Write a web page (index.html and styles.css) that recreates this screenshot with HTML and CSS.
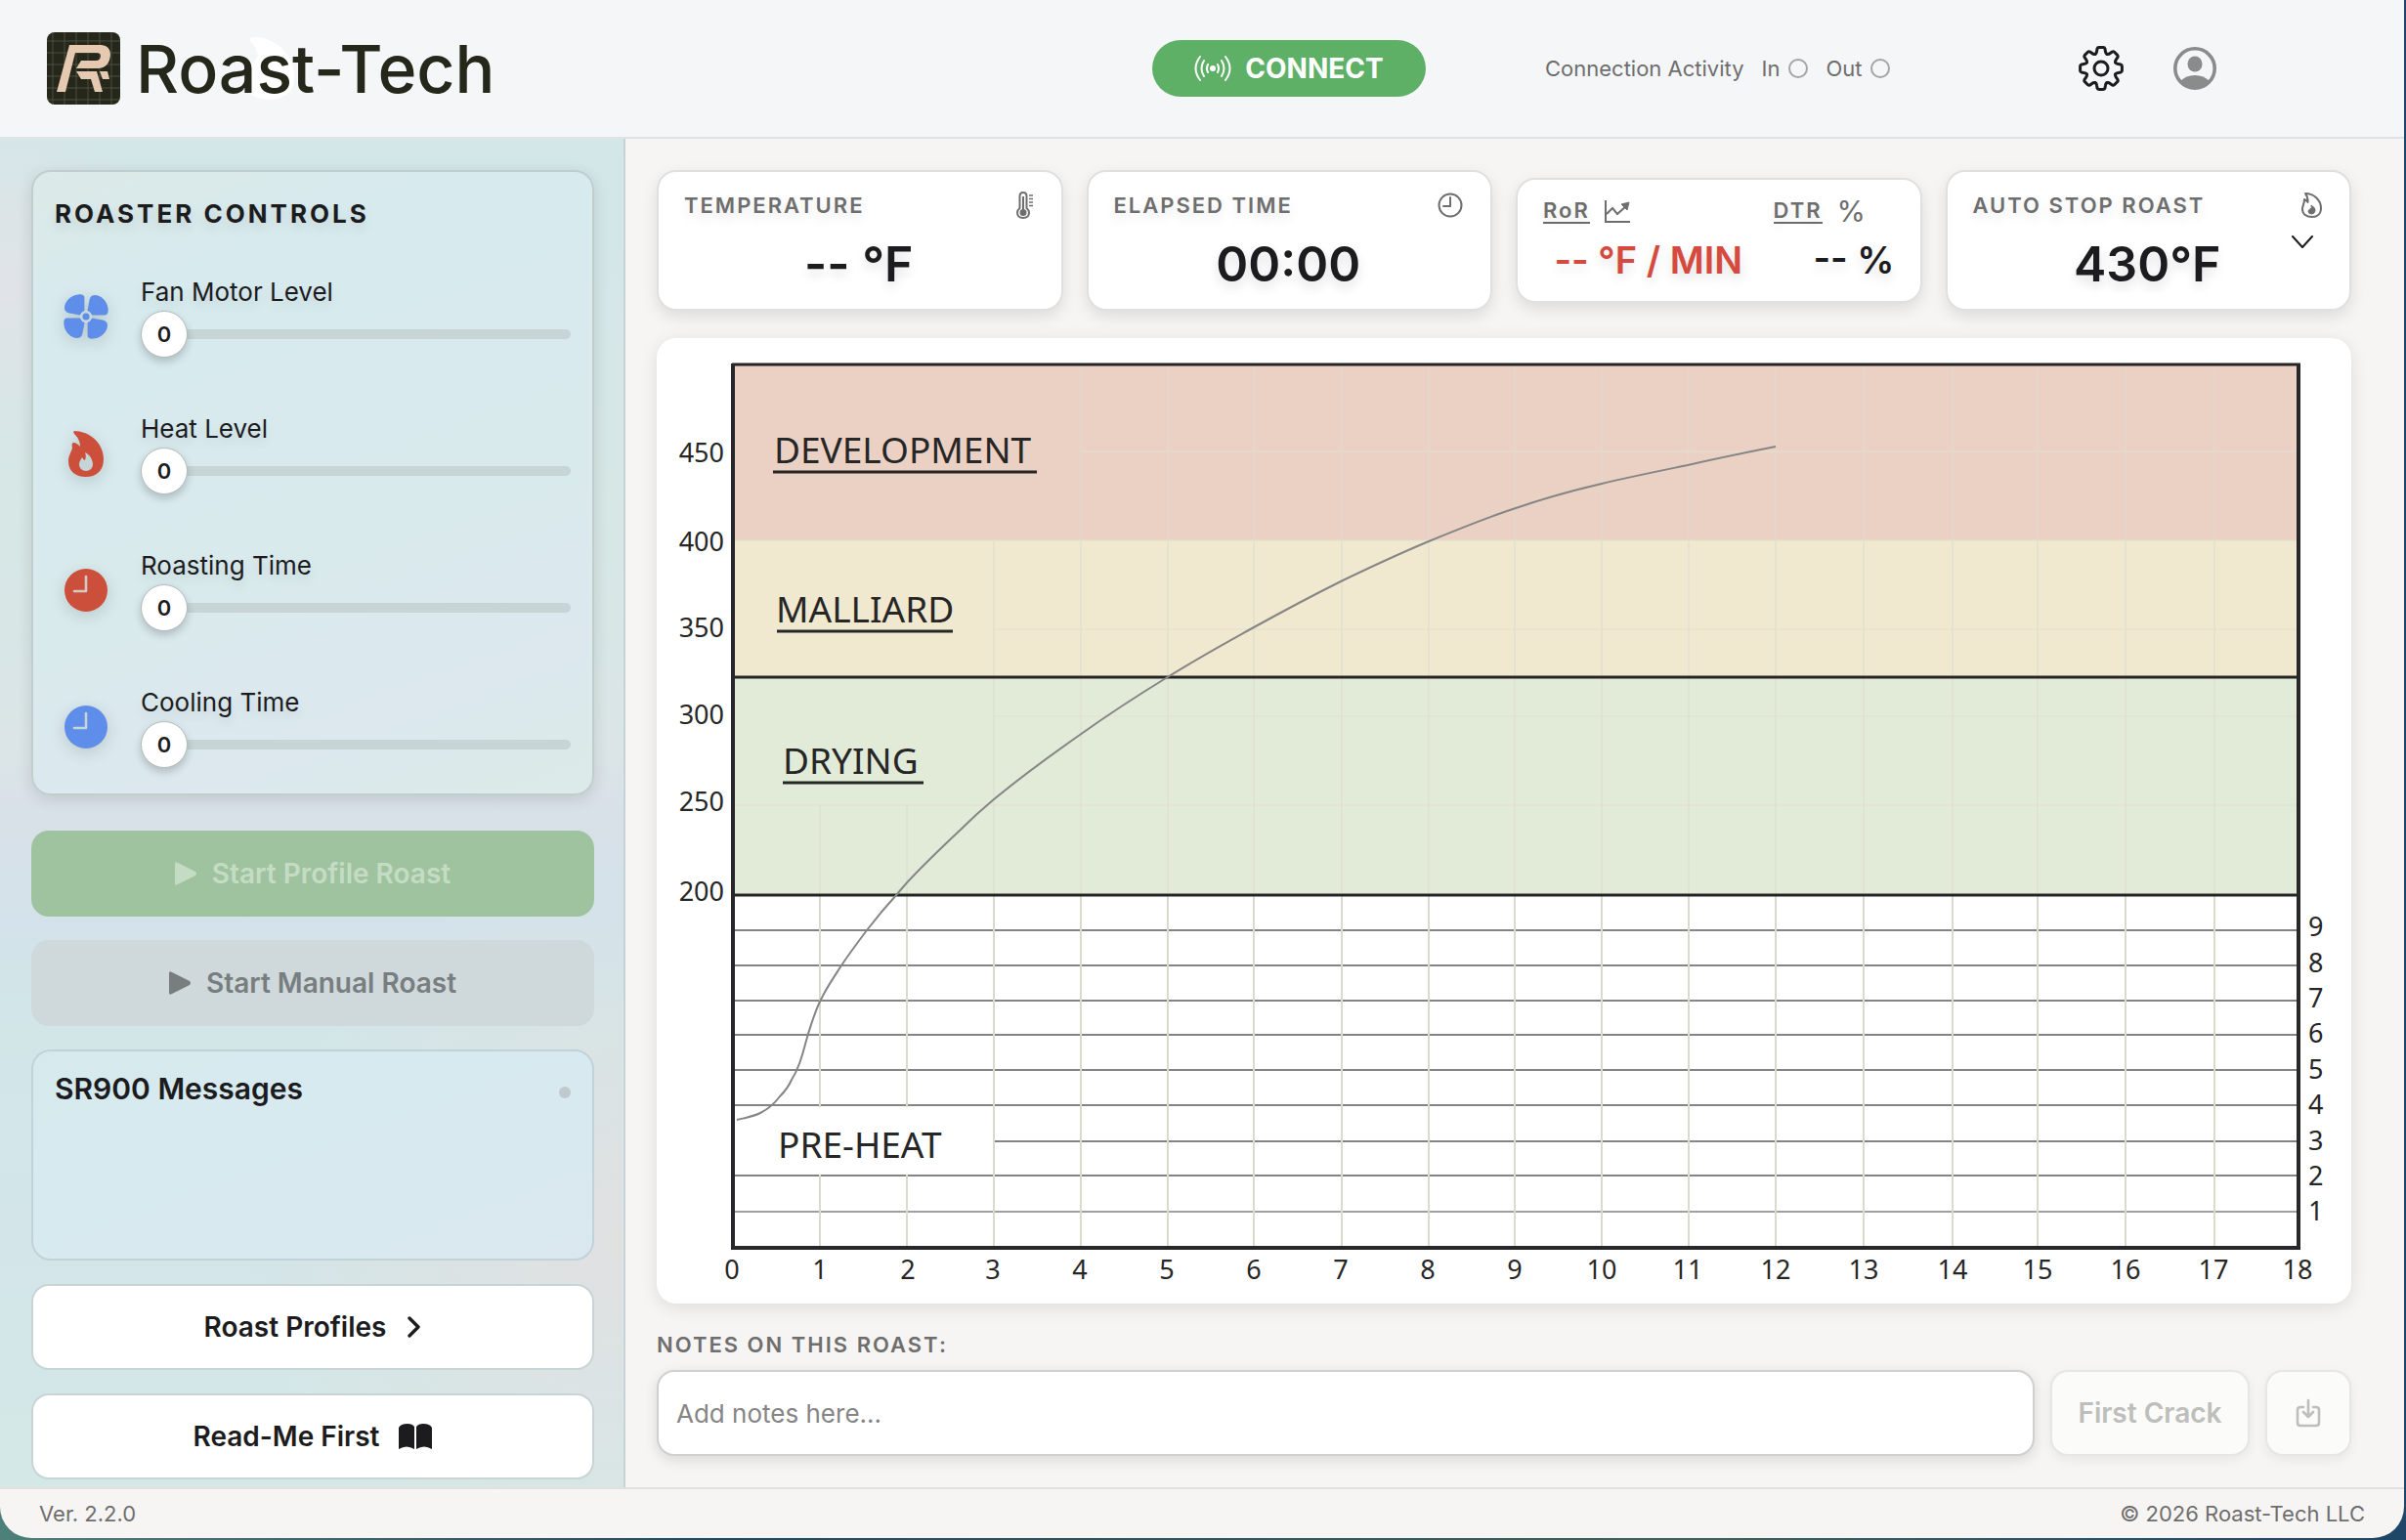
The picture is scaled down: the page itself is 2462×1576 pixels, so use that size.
FILE: index.html
```html
<!DOCTYPE html>
<html lang="en">
<head>
    <meta charset="UTF-8">
    <meta name="viewport" content="width=device-width, initial-scale=1.0">
    <title>Roast-Tech</title>
    <link rel="stylesheet" href="styles.css">
</head>
<body>
<div class="window">
    <header class="topbar">
        <div class="brand">
            <svg class="brand-badge" viewBox="0 0 75 74" aria-hidden="true">
                <defs>
                    <pattern id="mesh" width="12" height="12" patternUnits="userSpaceOnUse">
                        <path d="M6 0V12M0 9H12" stroke="#4b4c40" stroke-width="1" fill="none"/>
                    </pattern>
                </defs>
                <rect width="75" height="74" rx="8" fill="#26271b"/>
                <rect width="75" height="74" rx="8" fill="url(#mesh)"/>
                <path d="M23 13H56Q65 14 65 23Q64 36 53 37H30L35 29H50Q55 29 55 24Q55 21 51 21H29L19 61H10Z" fill="#e5c9b1"/>
                <path d="M30 40H51L57 61H49L45 48H35ZM54 40H62L64 48H57Z" fill="#e5c9b1"/>
            </svg>
            <span class="brand-name">
                <svg class="brand-drop" viewBox="0 0 53 64" aria-hidden="true">
                    <path d="M5 1Q10-1 18 1Q44 8 50 36Q53 62 25 64Q0 64 0 42Q8 25 13 20Q12 10 5 4Z" fill="#fff"/>
                </svg>
                <span>Roast-Tech</span>
            </span>
        </div>
        <button class="connect" type="button">
            <svg width="38" height="26" viewBox="0 0 38 26" fill="none" stroke="#fff" stroke-width="2" stroke-linecap="round" aria-hidden="true">
                <circle cx="19" cy="13" r="3" fill="#fff" stroke="none"/>
                <path d="M14 9Q12 13 14 17M24 9Q26 13 24 17M10 5Q5 13 10 21M28 5Q33 13 28 21M6 1Q-3 13 6 25M32 1Q41 13 32 25"/>
            </svg>
            CONNECT
        </button>
        <div class="activity">
            <span>Connection Activity</span>
            <span class="signal">In <i class="lamp"></i></span>
            <span class="signal">Out <i class="lamp"></i></span>
        </div>
        <div class="tools">
            <button class="tool" type="button" aria-label="Settings">
                <svg width="46" height="46" viewBox="-23 -23 46 46" fill="none" stroke="#1c1c1e" stroke-width="3" stroke-linecap="round" stroke-linejoin="round">
                    <defs>
                        <path id="tooth" d="M-6-14.6Q-4.6-15.4-4.4-17.5L-4-20Q-3.6-21.4-2.2-21.4H2.2Q3.6-21.4 4-20L4.4-17.5Q4.6-15.4 6-14.6"/>
                    </defs>
                    <use href="#tooth"/>
                    <use href="#tooth" transform="rotate(45)"/>
                    <use href="#tooth" transform="rotate(90)"/>
                    <use href="#tooth" transform="rotate(135)"/>
                    <use href="#tooth" transform="rotate(180)"/>
                    <use href="#tooth" transform="rotate(225)"/>
                    <use href="#tooth" transform="rotate(270)"/>
                    <use href="#tooth" transform="rotate(315)"/>
                    <circle r="7"/>
                </svg>
            </button>
            <button class="tool" type="button" aria-label="Account">
                <svg width="44" height="44" viewBox="0 0 44 44">
                    <circle cx="22" cy="22" r="20.2" fill="none" stroke="#8a8c8c" stroke-width="3.6"/>
                    <ellipse cx="22" cy="17.5" rx="7.5" ry="8" fill="#8a8c8c"/>
                    <path d="M7 35Q13 29 22 29Q31 29 37 35Q31 43 22 43Q13 43 7 35Z" fill="#8a8c8c"/>
                </svg>
            </button>
        </div>
    </header>

    <div class="content">
        <aside class="sidebar">
            <section class="controls">
                <h2>ROASTER CONTROLS</h2>

                <div class="control">
                    <svg class="control-icon" width="48" height="48" viewBox="-24 -24 48 48" fill="#5f8dea" aria-hidden="true">
                        <defs>
                            <path id="blade" d="M-1.6-6V-20C-2-22-4-23-8-22.6C-16-22-22-15-22-9C-22-5-19-4-17-3.500L-6-1.500Z"/>
                        </defs>
                        <use href="#blade"/>
                        <use href="#blade" transform="rotate(90)"/>
                        <use href="#blade" transform="rotate(180)"/>
                        <use href="#blade" transform="rotate(270)"/>
                        <circle r="6" fill="#d8e9ed"/>
                        <circle r="4.500" stroke="#c5d5d6" stroke-width="2"/>
                    </svg>
                    <div class="control-body">
                        <label for="fan">Fan Motor Level</label>
                        <div class="slider">
                            <input type="range" id="fan" min="0" max="9" value="0">
                            <output for="fan">0</output>
                        </div>
                    </div>
                </div>

                <div class="control">
                    <svg class="control-icon" width="36" height="47" viewBox="0 0 36 47" aria-hidden="true">
                        <path d="M6 0C20 0 36 11 36 29C36 41 28 47 18 47C7 47 0 41 0 31C0 25 3 22 4 17C3 14 4 12 5 12C8 12 10 14 12 16C12 10 9 6 6 3C5 2 5 0 6 0Z" fill="#cc4f3c"/>
                        <path d="M17 22C22 24 25 30 25 34C25 38 22 41 18 41C14 41 11 38 11 34C11 31 13 29 14 27C15 29 16 30 17 30C18 27 18 25 17 22Z" fill="#c5d5d6"/>
                    </svg>
                    <div class="control-body">
                        <label for="heat">Heat Level</label>
                        <div class="slider">
                            <input type="range" id="heat" min="0" max="9" value="0">
                            <output for="heat">0</output>
                        </div>
                    </div>
                </div>

                <div class="control">
                    <svg class="control-icon" width="44" height="44" viewBox="0 0 44 44" aria-hidden="true">
                        <circle cx="22" cy="22" r="22" fill="#cc4f3c"/>
                        <path d="M22 8V23H10" fill="none" stroke="#d3c9c5" stroke-width="2.6" stroke-linecap="round" stroke-linejoin="round"/>
                    </svg>
                    <div class="control-body">
                        <label for="roastTime">Roasting Time</label>
                        <div class="slider">
                            <input type="range" id="roastTime" min="0" max="15" value="0">
                            <output for="roastTime">0</output>
                        </div>
                    </div>
                </div>

                <div class="control">
                    <svg class="control-icon" width="44" height="44" viewBox="0 0 44 44" aria-hidden="true">
                        <circle cx="22" cy="22" r="22" fill="#5f8dea"/>
                        <path d="M22 8V23H10" fill="none" stroke="#c5d5d6" stroke-width="2.6" stroke-linecap="round" stroke-linejoin="round"/>
                    </svg>
                    <div class="control-body">
                        <label for="coolTime">Cooling Time</label>
                        <div class="slider">
                            <input type="range" id="coolTime" min="0" max="15" value="0">
                            <output for="coolTime">0</output>
                        </div>
                    </div>
                </div>
            </section>

            <button class="side-btn start-profile" type="button" disabled>
                <svg width="22" height="24" viewBox="0 0 22 24" fill="currentColor" aria-hidden="true"><path d="M0 2Q0-1 3 1L21 10Q23 12 21 14L3 23Q0 25 0 22Z"/></svg>
                Start Profile Roast
            </button>
            <button class="side-btn start-manual" type="button" disabled>
                <svg width="22" height="24" viewBox="0 0 22 24" fill="currentColor" aria-hidden="true"><path d="M0 2Q0-1 3 1L21 10Q23 12 21 14L3 23Q0 25 0 22Z"/></svg>
                Start Manual Roast
            </button>

            <section class="messages">
                <h2>SR900 Messages</h2>
                <span class="status-dot"></span>
            </section>

            <button class="side-btn plain" type="button">
                Roast Profiles
                <svg class="btn-chevron" width="14" height="22" viewBox="0 0 14 22" fill="none" stroke="currentColor" stroke-width="3.4" stroke-linecap="round" stroke-linejoin="round" aria-hidden="true"><path d="M2 2L11 11L2 20"/></svg>
            </button>
            <button class="side-btn plain" type="button">
                Read-Me First
                <svg class="btn-book" width="34" height="26" viewBox="0 0 34 26" fill="currentColor" aria-hidden="true"><path d="M0 4Q2 0 9 0Q14 0 16 3V26Q8 21 0 26ZM18 3Q20 0 25 0Q32 0 34 4V26Q26 21 18 26Z"/></svg>
            </button>
        </aside>

        <main class="main">
            <div class="stats">
                <section class="stat">
                    <div class="stat-head">
                        <h3>TEMPERATURE</h3>
                        <svg width="18" height="28" viewBox="0 0 18 28" fill="none" stroke="#6e6e6e" stroke-width="2" aria-hidden="true">
                            <path d="M3.5 5Q3.5 1 7 1Q10.500 1 10.500 5V17Q13 19 13 21.500Q13 27 7 27Q1 27 1 21.500Q1 19 3.500 17Z"/>
                            <path d="M7 5V19" stroke-width="2"/>
                            <circle cx="7" cy="21.500" r="2.500" fill="#6e6e6e"/>
                            <path d="M13 4H17M13 7.500H17M13 11H17M13 14.500H17" stroke-width="1.500"/>
                        </svg>
                    </div>
                    <p class="stat-value">-- °F</p>
                </section>

                <section class="stat">
                    <div class="stat-head">
                        <h3>ELAPSED TIME</h3>
                        <svg width="26" height="26" viewBox="0 0 26 26" fill="none" stroke="#6e6e6e" stroke-width="2" stroke-linecap="round" aria-hidden="true">
                            <circle cx="13" cy="13" r="11.500"/>
                            <path d="M13 5V14H6"/>
                        </svg>
                    </div>
                    <p class="stat-value">00:00</p>
                </section>

                <section class="stat split">
                    <div class="half rate">
                        <div class="half-head">
                            <h3 class="underlined">RoR</h3>
                            <svg width="26" height="23" viewBox="0 0 26 23" fill="none" stroke="#6e6e6e" stroke-width="2" aria-hidden="true">
                                <path d="M1 0V22H26"/>
                                <path d="M2 14L8 8L13 14L22 6"/>
                                <path d="M17 4L25 2L23 10Z" fill="#6e6e6e" stroke-width="1"/>
                            </svg>
                        </div>
                        <p class="half-value">-- °F / MIN</p>
                    </div>
                    <div class="half dtr">
                        <div class="half-head">
                            <h3 class="underlined">DTR</h3>
                            <span class="percent">%</span>
                        </div>
                        <p class="half-value">-- %</p>
                    </div>
                </section>

                <section class="stat">
                    <div class="stat-head">
                        <h3><label for="autoStop">AUTO STOP ROAST</label></h3>
                        <svg width="21" height="26" viewBox="0 0 21 26" fill="none" stroke="#6e6e6e" stroke-width="2" stroke-linejoin="round" aria-hidden="true">
                            <path d="M4 1C13 1 20 8 20 16C20 22 16 25 11 25C5 25 1 22 1 17C1 13 3 12 3 7Q5 8 6.500 10Q7 5 4 1Z"/>
                            <path d="M10 13Q15 16 14 19Q13 22 10.500 22Q7 22 7 19Q8 17 9 17Q11 16 10 13Z" fill="#6e6e6e" stroke-width="1"/>
                        </svg>
                    </div>
                    <select id="autoStop" class="stat-value">
                        <option>430°F</option>
                        <option>440°F</option>
                        <option>450°F</option>
                    </select>
                    <svg class="select-arrow" width="22" height="13" viewBox="0 0 22 13" fill="none" stroke="#1c1c1e" stroke-width="2" stroke-linecap="round" stroke-linejoin="round" aria-hidden="true"><path d="M1 1L11 12L21 1"/></svg>
                </section>
            </div>

            <section class="chart">
                <svg viewBox="0 0 1734 988" role="img" aria-label="Roast curve">
                    <!-- phases -->
                    <rect class="development" x="78" y="27" width="1602" height="180"/>
                    <rect class="malliard" x="78" y="207" width="1602" height="140"/>
                    <rect class="drying" x="78" y="347" width="1602" height="223"/>

                    <!-- power steps -->
                    <path class="steps" d="M80 606H1678M80 642H1678M80 678H1678M80 713H1678M80 749H1678M80 785H1678M346 822H1678M80 857H1678"/>
                    <path class="steps faint" d="M80 894H1678"/>

                    <!-- minutes -->
                    <path class="minutes soft" d="M434 28V570M523 28V570M611 28V570M701 28V570M790 28V570M878 28V570M967 28V570M1056 28V570M1145 28V570M1235 28V570M1326 28V570M1413 28V570M1503 28V570M1594 28V570M345 208V570M167 478V570M256 478V570"/>
                    <path class="minutes" d="M167 570V787M167 856V929M256 570V787M256 856V929M345 570V929M434 570V929M523 570V929M611 570V929M701 570V929M790 570V929M878 570V929M967 570V929M1056 570V929M1145 570V929M1235 570V929M1326 570V929M1413 570V929M1503 570V929M1594 570V929"/>
                    <path class="degrees" d="M434 116H1678M80 207H1678M345 298H1678M345 387H1678M80 478H1678"/>

                    <!-- frame -->
                    <path class="divider" d="M78 347H1680M78 570H1680"/>
                    <path class="divider" d="M77 27H1682"/>
                    <path class="axis" d="M78 26V931H1680V26"/>

                    <path class="curve" d="M82 800C90 798 98 797 106 793C114 789 120 784 126 776C131 771 135 766 138 759C147 745 150 729 155 712C159 699 163 686 169 675C175 663 182 653 189 642C197 630 206 618 215 606C225 593 235 581 246 569C251 563 256 557 261 552C277 535 294 519 311 503C322 492 333 482 345 472C373 449 403 427 433 406C461 386 490 367 521 348C550 330 580 313 611 296C640 280 670 264 700 249C729 235 759 221 790 208C819 196 848 184 879 174C908 164 937 156 967 149C996 142 1026 136 1055 130C1085 123 1115 117 1145 111"/>

                    <g class="phase">
                        <text x="120" y="128">DEVELOPMENT</text>
                        <text x="122" y="291">MALLIARD</text>
                        <text x="129" y="446">DRYING</text>
                        <text x="124" y="839">PRE-HEAT</text>
                    </g>
                    <path class="phase-line" d="M119 137H389M123 300H303M129 455H273"/>

                    <g class="scale left">
                        <text x="69" y="127">450</text>
                        <text x="69" y="218">400</text>
                        <text x="69" y="306">350</text>
                        <text x="69" y="395">300</text>
                        <text x="69" y="484">250</text>
                        <text x="69" y="576">200</text>
                    </g>
                    <g class="scale bottom">
                        <text x="77" y="963">0</text>
                        <text x="167" y="963">1</text>
                        <text x="257" y="963">2</text>
                        <text x="344" y="963">3</text>
                        <text x="433" y="963">4</text>
                        <text x="522" y="963">5</text>
                        <text x="611" y="963">6</text>
                        <text x="700" y="963">7</text>
                        <text x="789" y="963">8</text>
                        <text x="878" y="963">9</text>
                        <text x="967" y="963">10</text>
                        <text x="1055" y="963">11</text>
                        <text x="1145" y="963">12</text>
                        <text x="1235" y="963">13</text>
                        <text x="1326" y="963">14</text>
                        <text x="1413" y="963">15</text>
                        <text x="1503" y="963">16</text>
                        <text x="1593" y="963">17</text>
                        <text x="1679" y="963">18</text>
                    </g>
                    <g class="scale right">
                        <text x="1690" y="612">9</text>
                        <text x="1690" y="649">8</text>
                        <text x="1690" y="685">7</text>
                        <text x="1690" y="721">6</text>
                        <text x="1690" y="758">5</text>
                        <text x="1690" y="794">4</text>
                        <text x="1690" y="831">3</text>
                        <text x="1690" y="867">2</text>
                        <text x="1690" y="903">1</text>
                    </g>
                </svg>
            </section>

            <div class="notes">
                <label for="notes">NOTES ON THIS ROAST:</label>
                <div class="notes-row">
                    <input type="text" id="notes" placeholder="Add notes here...">
                    <button class="ghost first-crack" type="button" disabled>First Crack</button>
                    <button class="ghost save" type="button" aria-label="Save roast" disabled>
                        <svg width="26" height="30" viewBox="0 0 26 30" fill="none" stroke="currentColor" stroke-width="2.600" stroke-linecap="round" stroke-linejoin="round" aria-hidden="true">
                            <path d="M8 9H5Q2 9 2 12V25Q2 28 5 28H21Q24 28 24 25V12Q24 9 21 9H18"/>
                            <path d="M13 2V19M8 14L13 19L18 14"/>
                        </svg>
                    </button>
                </div>
            </div>
        </main>
    </div>

    <footer class="footer">
        <span>Ver. 2.2.0</span>
        <span>© 2026 Roast-Tech LLC</span>
    </footer>
</div>
</body>
</html>
```

FILE: styles.css
```css
* {
    box-sizing: border-box;
}

body {
    margin: 0;
    background: linear-gradient(90deg, #4c8078, #24495a 30%, #41605a 70%, #1d4668);
    color: #1c1c1e;
    font-family: Inter, "Liberation Sans", sans-serif;
    font-size: 26px;
}

h2, h3, p {
    margin: 0;
}

button, input, select {
    font-family: inherit;
    color: inherit;
}

.window {
    display: flex;
    flex-direction: column;
    min-height: calc(100vh - 2px);
    margin-right: 2px;
    overflow: hidden;
    background: #f7f5f3;
    border-radius: 0 0 32px 32px;
}

/* top bar */
.topbar {
    display: flex;
    align-items: center;
    height: 142px;
    padding: 0 192px 0 48px;
    background: #f5f6f8;
    border-bottom: 2px solid #e1e2e4;
}

.brand {
    display: flex;
    align-items: center;
    gap: 16px;
    margin-right: auto;
}

.brand-badge {
    width: 75px;
    height: 74px;
}

.brand-name {
    position: relative;
    font-size: 68px;
    font-weight: 500;
    line-height: 72px;
    color: #26271b;
}

.brand-name span {
    position: relative;
}

.brand-drop {
    position: absolute;
    left: 112px;
    top: 4px;
    width: 53px;
    height: 64px;
}

.connect {
    display: flex;
    align-items: center;
    justify-content: center;
    gap: 14px;
    width: 280px;
    height: 58px;
    margin-right: 122px;
    border: 0;
    border-radius: 29px;
    background: #5eb067;
    color: #fff;
    font-size: 28px;
    font-weight: 700;
}

.activity {
    display: flex;
    align-items: center;
    gap: 18px;
    width: 358px;
    margin-right: 188px;
    font-size: 22px;
    color: #6e6e6e;
    white-space: nowrap;
}

.signal {
    display: flex;
    align-items: center;
    gap: 9px;
}

.lamp {
    width: 20px;
    height: 20px;
    border: 2px solid #a3a4a6;
    border-radius: 50%;
}

.tools {
    display: flex;
    align-items: center;
    gap: 51px;
}

.tool {
    display: flex;
    padding: 0;
    border: 0;
    background: none;
}

/* layout */
.content {
    display: flex;
    flex: 1;
}

.sidebar {
    display: flex;
    flex-direction: column;
    gap: 24px;
    flex: 0 0 640px;
    padding: 32px 30px 8px 32px;
    border-right: 2px solid #c5d2d6;
    background:
        radial-gradient(circle at 0 150px, rgba(226, 227, 232, 0.9), rgba(226, 227, 232, 0) 180px),
        radial-gradient(circle at 100% 1130px, rgba(226, 224, 224, 0.9), rgba(226, 224, 224, 0) 380px),
        linear-gradient(#d3e6e8, #d6e7e6 28%, #dbe5e7 45%, #d8e0e8 51%, #d3e2ea 58%, #d2e6e8 66%, #d3e5e8 82%, #d4e8e7);
}

.controls {
    margin-bottom: 12px;
    padding: 24px 22px 26px;
    border: 2px solid #c1ced0;
    border-radius: 20px;
    background: linear-gradient(160deg, #dceae8, #d7eaee 20%, #d9eaec 60%, #dce8ee 80%, #dceae8);
    box-shadow: 0 4px 16px rgba(0, 0, 0, 0.12);
}

.controls h2 {
    margin-bottom: 44px;
    font-size: 26px;
    line-height: 38px;
    font-weight: 700;
    letter-spacing: 3px;
    text-shadow: 0 6px 12px rgba(0, 0, 0, 0.1);
}

.control {
    display: grid;
    grid-template-columns: 64px 1fr;
    gap: 24px;
    align-items: center;
}

.control + .control {
    margin-top: 56px;
}

.control-icon {
    justify-self: center;
    filter: drop-shadow(0 4px 8px rgba(0, 0, 0, 0.14));
}

.control-body {
    display: flex;
    flex-direction: column;
    gap: 2px;
}

.control-body label {
    line-height: 34px;
    text-shadow: 0 6px 12px rgba(0, 0, 0, 0.1);
}

.slider {
    position: relative;
    height: 48px;
}

.slider input {
    -webkit-appearance: none;
    appearance: none;
    display: block;
    width: 100%;
    height: 48px;
    margin: 0;
    background: none;
}

.slider input::-webkit-slider-runnable-track {
    height: 10px;
    border-radius: 5px;
    background: #c7d5d7;
}

.slider input::-webkit-slider-thumb {
    -webkit-appearance: none;
    width: 48px;
    height: 48px;
    margin-top: -19px;
    border: 1px solid #b4bcbd;
    border-radius: 50%;
    background: #fff;
    box-shadow: 0 4px 8px rgba(0, 0, 0, 0.2);
}

.slider output {
    position: absolute;
    left: 0;
    top: 0;
    width: 48px;
    font-size: 22px;
    line-height: 48px;
    font-weight: 600;
    text-align: center;
    pointer-events: none;
}

.side-btn {
    display: flex;
    align-items: center;
    justify-content: center;
    gap: 16px;
    height: 88px;
    border: 0;
    border-radius: 18px;
    font-size: 28px;
    font-weight: 600;
}

.start-profile {
    background: #9fc39f;
    color: #c5dcc4;
}

.start-manual {
    background: #cfd8da;
    color: #787e80;
}

.plain {
    border: 2px solid #c9d4d6;
    background: #fff;
    color: #1c1c1e;
}

.btn-chevron {
    margin-left: 6px;
}

.btn-book {
    margin-left: 4px;
}

.messages {
    display: flex;
    justify-content: space-between;
    height: 216px;
    padding: 20px 22px;
    border: 2px solid #c1d2d8;
    border-radius: 20px;
    background: linear-gradient(160deg, #d6eaee, #d8eaf0 60%, #dae7ef);
}

.messages h2 {
    font-size: 30px;
    line-height: 36px;
    font-weight: 600;
}

.status-dot {
    width: 12px;
    height: 12px;
    margin-top: 16px;
    border-radius: 50%;
    background: #c0cacc;
}

.main {
    display: flex;
    flex-direction: column;
    flex: 1;
    min-width: 0;
    padding: 32px 54px 32px 32px;
}

/* readouts */
.stats {
    display: grid;
    grid-template-columns: repeat(4, 1fr);
    gap: 24px;
    align-items: center;
    margin-bottom: 28px;
}

.stat {
    position: relative;
    padding: 20px 28px 16px 26px;
    border: 2px solid #e0e0e0;
    border-radius: 20px;
    background: #fff;
    box-shadow: 0 6px 16px rgba(0, 0, 0, 0.1);
}

.stat h3 {
    font-size: 22px;
    font-weight: 600;
    letter-spacing: 2px;
    line-height: 28px;
    color: #6e6e6e;
    text-shadow: 0 6px 12px rgba(0, 0, 0, 0.1);
}

.stat-head {
    display: flex;
    align-items: center;
    justify-content: space-between;
    height: 28px;
    margin-bottom: 16px;
}

.stat-value {
    display: block;
    width: 100%;
    height: 60px;
    padding: 0;
    border: 0;
    background: none;
    appearance: none;
    font-size: 50px;
    line-height: 60px;
    font-weight: 600;
    text-align: center;
    text-align-last: center;
    text-shadow: 0 6px 12px rgba(0, 0, 0, 0.12);
}

.select-arrow {
    position: absolute;
    right: 37px;
    top: 65px;
    pointer-events: none;
}

.split {
    display: flex;
    gap: 20px;
    padding: 18px 26px;
}

.half-head {
    display: flex;
    align-items: center;
    gap: 15px;
    height: 28px;
    margin-bottom: 12px;
    color: #6e6e6e;
}

.stat .underlined {
    border-bottom: 2px solid #6e6e6e;
    line-height: 24px;
}

.percent {
    font-size: 30px;
    line-height: 28px;
}

.half-value {
    font-size: 38px;
    line-height: 48px;
    font-weight: 600;
    text-align: center;
    white-space: nowrap;
    text-shadow: 0 6px 12px rgba(0, 0, 0, 0.12);
}

.rate {
    flex: 1;
}

.rate .half-value {
    color: #d44a3e;
}

.dtr {
    width: 124px;
}

.dtr .half-value {
    text-align: right;
}

/* chart */
.chart {
    flex: 1;
    border-radius: 20px;
    background: #fff;
    box-shadow: 0 4px 18px rgba(0, 0, 0, 0.1);
}

.chart svg {
    display: block;
    width: 100%;
    font-family: "Noto Sans", "Open Sans", sans-serif;
}

.development {
    fill: #ebd1c4;
}

.malliard {
    fill: #f1e8d0;
}

.drying {
    fill: #e2ebd8;
}

.steps {
    stroke: #5c5c5e;
    stroke-width: 1.5;
}

.steps.faint {
    stroke: #a0a0a2;
    stroke-width: 2;
}

.minutes {
    stroke: #d9dccc;
    stroke-width: 2;
}

.minutes.soft {
    stroke: #dcdccd;
    stroke-width: 1;
}

.degrees {
    stroke: #e2dfcf;
    stroke-width: 1;
}

.divider {
    stroke: #242424;
    stroke-width: 3;
}

.axis {
    fill: none;
    stroke: #28282b;
    stroke-width: 4;
}

.curve {
    fill: none;
    stroke: #858585;
    stroke-width: 2;
}

.phase {
    font-size: 37px;
    fill: #262626;
}

.phase-line {
    stroke: #262626;
    stroke-width: 3;
}

.scale {
    font-size: 27px;
    fill: #262626;
}

.left {
    text-anchor: end;
}

.bottom {
    text-anchor: middle;
}

/* notes */
.notes label {
    display: block;
    margin: 28px 0 12px;
    font-size: 22px;
    line-height: 28px;
    font-weight: 600;
    letter-spacing: 2px;
    color: #6e6e6e;
}

.notes-row {
    display: flex;
    gap: 16px;
}

.notes input {
    flex: 1;
    min-width: 0;
    height: 88px;
    padding: 0 18px;
    border: 2px solid #d0d0d0;
    border-radius: 18px;
    background: #fff;
    font-size: 26px;
    box-shadow: 0 4px 14px rgba(0, 0, 0, 0.12);
}

.notes input::placeholder {
    color: #858585;
}

.ghost {
    display: flex;
    align-items: center;
    justify-content: center;
    height: 88px;
    padding: 0;
    border: 2px solid #e6e6e4;
    border-radius: 18px;
    background: #fbfbf9;
    color: #bebebc;
    font-size: 28px;
    font-weight: 600;
    box-shadow: 0 4px 12px rgba(0, 0, 0, 0.06);
}

.first-crack {
    width: 204px;
}

.save {
    width: 88px;
}

.footer {
    display: flex;
    align-items: center;
    justify-content: space-between;
    height: 52px;
    padding: 0 40px;
    border-top: 2px solid #e2e0de;
    font-size: 22px;
    color: #6e6e6e;
}
```
